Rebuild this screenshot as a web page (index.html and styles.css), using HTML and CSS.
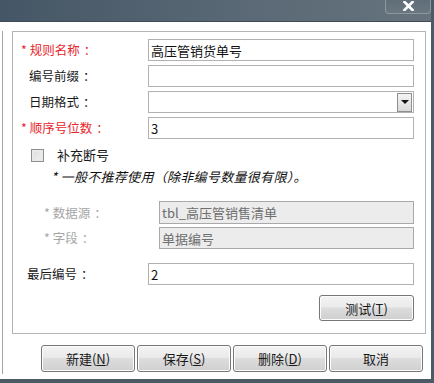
FILE: index.html
```html
<!DOCTYPE html>
<html lang="zh-CN">

<head>
  <meta charset="UTF-8">
  <meta name="viewport" content="width=device-width, initial-scale=1.0">
  <title>编号规则</title>

  <link rel="stylesheet" href="styles.css">
</head>

<body>
  <div class="window">
    <div class="titlebar">
      <span class="close-btn">
        <svg width="13" height="10" viewBox="0 0 13 10">
          <path d="M2.5 1 L10.5 9 M10.5 1 L2.5 9" stroke="#fff" stroke-width="2.6" stroke-linecap="square" />
        </svg>
      </span>
    </div>

    <div class="client">
      <div class="panel">
        <div class="group">
          <div class="form-row">
            <label class="lbl req">* 规则名称<span class="colon">：</span></label>
            <input class="field" value="高压管销货单号" />
          </div>
          <div class="form-row">
            <label class="lbl">编号前缀<span class="colon">：</span></label>
            <input class="field" />
          </div>
          <div class="form-row">
            <label class="lbl">日期格式<span class="colon">：</span></label>
            <div class="field combo">
              <span class="combo-btn"><span class="arrow"></span></span>
            </div>
          </div>
          <div class="form-row">
            <label class="lbl req">* 顺序号位数<span class="colon">：</span></label>
            <input class="field" value="3" />
          </div>

          <div class="check-row">
            <span class="checkbox"></span>
            <span>补充断号</span>
          </div>
          <div class="note">* 一般不推荐使用（除非编号数量很有限）。</div>

          <div class="form-row src-row">
            <label class="lbl dim">* 数据源<span class="colon">：</span></label>
            <input class="field disabled" value="tbl_高压管销售清单" disabled />
          </div>
          <div class="form-row src-row">
            <label class="lbl dim">* 字段<span class="colon">：</span></label>
            <input class="field disabled" value="单据编号" disabled />
          </div>

          <div class="form-row last-row">
            <label class="lbl">最后编号<span class="colon">：</span></label>
            <input class="field" value="2" />
          </div>

          <div class="test-row">
            <button class="btn test-btn">测试(<u>T</u>)</button>
          </div>
        </div>

        <div class="actions">
          <button class="btn">新建(<u>N</u>)</button>
          <button class="btn">保存(<u>S</u>)</button>
          <button class="btn">删除(<u>D</u>)</button>
          <button class="btn">取消</button>
        </div>
      </div>
    </div>
  </div>
</body>

</html>
```

FILE: styles.css
```css
* {
  box-sizing: border-box;
}

body {
  margin: 0;
  width: 434px;
  height: 383px;
  overflow: hidden;
  background: #fff;
  font-family: "Noto Sans CJK SC", "Liberation Sans", sans-serif;
  font-size: 12px;
  color: #1a1a1a;
}

.window {
  width: 434px;
  height: 383px;
  border-right: 3px solid #4c5a66;
  border-bottom: 4px solid #4c5a66;
  display: flex;
  flex-direction: column;
}

.titlebar {
  height: 22px;
  flex: none;
  background: linear-gradient(to right, #455666, #5b6a76 60%, #66737d);
  border-bottom: 1px solid #3e4b56;
  display: flex;
  justify-content: flex-end;
}

.close-btn {
  width: 46px;
  height: 15px;
  margin-top: -1px;
  border: 1px solid #8c979f;
  border-top: none;
  border-radius: 0 0 4px 4px;
  background: linear-gradient(#5f6d78, #6a7781);
  display: flex;
  align-items: center;
  justify-content: center;
}

.client {
  flex: 1;
  padding: 9px 0 5px 2px;
  background: #fff;
}

.panel {
  height: 343px;
  border-left: 1px solid #a3a3a3;
  padding-left: 9px;
}

.group {
  width: 414px;
  height: 303px;
  border: 1px solid #b4b4b4;
  padding: 7px 11px 0 0;
}

.form-row {
  display: flex;
  align-items: center;
  height: 22px;
  margin-bottom: 4px;
}

.lbl {
  width: 135px;
  flex: none;
  padding-left: 16px;
  line-height: 22px;
  white-space: nowrap;
  font-size: 12.5px;
}

/* original UI font puts the full-width colon in the middle of its cell */
.colon {
  padding-left: 4px;
}

.lbl.req {
  padding-left: 8px;
  color: #e8242c;
}

.field {
  flex: 1;
  height: 22px;
  border: 1px solid #b1b1b1;
  background: #fff;
  font-family: inherit;
  font-size: 13px;
  color: #111;
  padding: 0 2px;
  outline: none;
}

.combo {
  display: flex;
  justify-content: flex-end;
  align-items: center;
  padding: 0 1px;
}

.combo-btn {
  width: 15px;
  height: 19px;
  border: 1px solid #8e8e8e;
  background: linear-gradient(#f4f4f4, #d9d9d9);
  display: flex;
  align-items: center;
  justify-content: center;
}

.arrow {
  width: 0;
  height: 0;
  border-left: 4px solid transparent;
  border-right: 4px solid transparent;
  border-top: 4px solid #111;
}

.check-row {
  display: flex;
  align-items: center;
  height: 22px;
  margin-top: 3px;
  padding-left: 18px;
  font-size: 13px;
}

.checkbox {
  width: 13px;
  height: 13px;
  border: 1px solid #8f8f8f;
  background: linear-gradient(135deg, #dcdcdc, #f3f3f3);
  box-shadow: inset 0 0 0 2px #e9e9e9;
  margin: 2px 13px 0 0;
}

.note {
  height: 22px;
  line-height: 22px;
  margin-top: 1px;
  padding-left: 38px;
  font-style: italic;
  font-size: 13px;
  letter-spacing: 0.3px;
  color: #111;
}

.src-row {
  margin-bottom: 3px;
}

.note + .src-row {
  margin-top: 13px;
  height: 23px;
}

.src-row .lbl {
  width: 146px;
  padding-left: 31px;
}

.src-row .field {
  height: 100%;
}

.lbl.dim {
  color: #a6a6a6;
}

.field.disabled {
  background: #ececec;
  border-color: #a9a9a9;
  color: #6e6e6e;
}

.last-row {
  margin-top: 14px;
  margin-bottom: 0;
}

.last-row .lbl {
  padding-left: 14px;
}

.test-row {
  display: flex;
  justify-content: flex-end;
  margin-top: 10px;
}

.btn {
  width: 94px;
  height: 27px;
  border: 1px solid #777;
  border-radius: 3px;
  background: linear-gradient(#f3f3f3 0%, #ebebeb 45%, #dddddd 50%, #cfcfcf 100%);
  box-shadow: inset 0 0 0 1px #fcfcfc;
  font-family: inherit;
  font-size: 13px;
  color: #1a1a1a;
  padding: 0;
}

.btn:hover {
  cursor: pointer;
}

.test-btn {
  width: 95px;
  height: 26px;
}

.actions {
  display: flex;
  justify-content: flex-end;
  column-gap: 2px;
  margin-top: 11px;
  padding-right: 8px;
}
```
